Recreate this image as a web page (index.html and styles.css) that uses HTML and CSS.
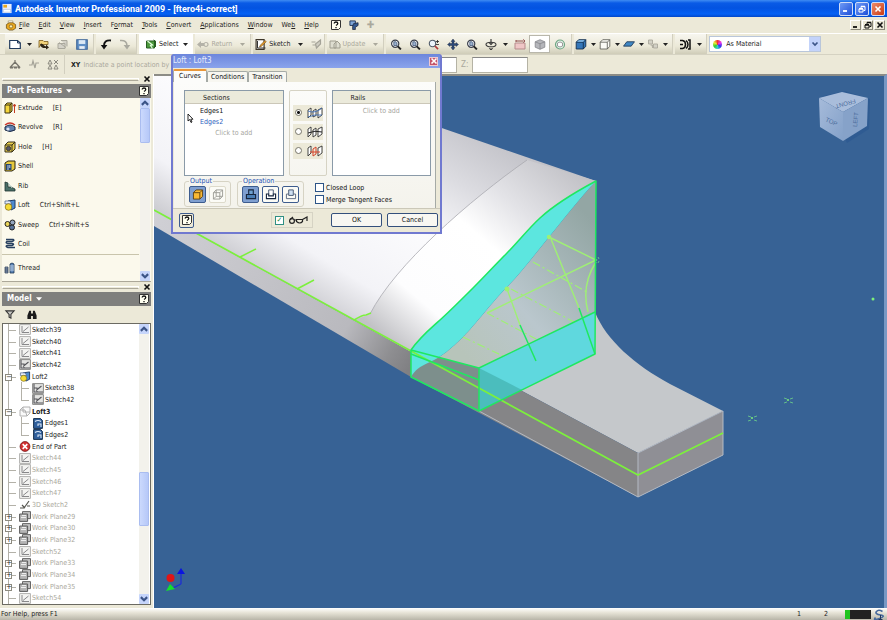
FILE: index.html
```html
<!DOCTYPE html>
<html lang="en">
<head>
    <meta charset="UTF-8">
    <meta name="viewport" content="width=device-width, initial-scale=1.0">
    <title>Autodesk Inventor Professional 2009 - [ftero4i-correct]</title>
    <link rel="stylesheet" href="styles.css">
</head>
<body>
    <!-- Shared icons -->
    <svg class="defs" aria-hidden="true">
        <symbol id="i-caret" viewBox="0 0 5 3"><path d="M0 0h5L2.500 3z" fill="currentColor"/></symbol>
        <symbol id="i-x" viewBox="0 0 8 8"><path d="M1.500 1.500l5 5M6.500 1.500l-5 5" stroke="currentColor" stroke-width="1.600" fill="none"/></symbol>
        <symbol id="i-min" viewBox="0 0 8 8"><path d="M1 6h4" stroke="currentColor" stroke-width="1.800"/></symbol>
        <symbol id="i-restore" viewBox="0 0 8 8"><path d="M1 4h4v3H1zM3 3.500V1.500h4v4H5.500" stroke="currentColor" fill="none"/><path d="M1 3.700h4M3 1.500h4" stroke="currentColor" stroke-width="1.500"/></symbol>
        <symbol id="i-up" viewBox="0 0 8 8"><path d="M1.500 5.500L4 3l2.500 2.500" stroke="#3c5588" stroke-width="1.700" fill="none"/></symbol>
        <symbol id="i-down" viewBox="0 0 8 8"><path d="M1.500 2.500L4 5l2.500-2.500" stroke="#3c5588" stroke-width="1.700" fill="none"/></symbol>
        <symbol id="i-help" viewBox="0 0 10 10"><path d="M.5.500h9v7l-2 2h-7z" fill="#fffff0" stroke="#333"/><path d="M3.200 3.600Q3.200 2 5 2t1.800 1.500Q6.800 4.500 5 5.500M5 7v1.200" fill="none" stroke="#111" stroke-width="1.300"/></symbol>
        <symbol id="i-app" viewBox="0 0 12 12"><path d="M1 1h10v10H1z" fill="#e8eefc"/><path d="M2 2h4v3H2z" fill="#e8a820"/><path d="M2 7h8v3H2z" fill="#fff" stroke="#9db4dd" stroke-width=".6"/></symbol>
        <symbol id="i-part" viewBox="0 0 12 12"><path d="M3 1h5v4H3z" fill="#fff" stroke="#8a7a48" stroke-width=".6"/><path d="M1 5l3-2h4l3 2v4l-3 2H4L1 9z" fill="#e8a820" stroke="#6b4b10" stroke-width=".8"/><circle cx="6" cy="7" r="1.800" fill="#fff3b0" stroke="#6b4b10" stroke-width=".7"/></symbol>
        <symbol id="i-new" viewBox="0 0 12 10"><path d="M.7 1h7.800l2.800 2.500V9H.7z" fill="#fff" stroke="#223a5c" stroke-width="1.200"/><path d="M8.500 1v2.500h2.800" fill="none" stroke="#223a5c"/></symbol>
        <symbol id="i-open" viewBox="0 0 12 10"><path d="M1 1h4l1 1h4v3H3L1 8z" fill="#f3d37a" stroke="#7a5a1c" stroke-width=".8"/><path d="M2 5c2-3 3 1 6 2V5l3 3-3 2V8.500C5 9 3 8 2 5z" fill="#2d2416"/></symbol>
        <symbol id="i-saveall" viewBox="0 0 12 10"><path d="M1 4h7v5H1zM4 1h6v6" fill="#d4d2c8" stroke="#aaa89c"/><path d="M2 3l7 5" stroke="#aaa89c"/></symbol>
        <symbol id="i-save" viewBox="0 0 11 10"><path d="M.7.700h9.600v8.600H.7z" fill="#5f8fc6" stroke="#3a6296"/><path d="M2.500 1h6v3.500h-6z" fill="#dbe8f5"/><path d="M3 6.500h5V9H3z" fill="#e8eef5"/></symbol>
        <symbol id="i-undo" viewBox="0 0 12 11"><path d="M11 1.500C6 1 4 3 4 7" fill="none" stroke="#111" stroke-width="1.900"/><path d="M.8 6h6.600L4 10.500z" fill="#111"/></symbol>
        <symbol id="i-redo" viewBox="0 0 12 11"><path d="M1 1.500C6 1 8 3 8 7" fill="none" stroke="#aaa99f" stroke-width="1.600"/><path d="M4.600 6h6.600L8 10.500z" fill="#aaa99f"/></symbol>
        <symbol id="i-select" viewBox="0 0 11 11"><path d="M1 2h8v7H1z" fill="#4d9a3d" stroke="#275d20"/><path d="M2 2l5 4-2 .5 2 3" fill="none" stroke="#e6ffe0" stroke-width="1.200"/><path d="M8 1l2 1v6" stroke="#275d20" fill="none"/></symbol>
        <symbol id="i-return" viewBox="0 0 12 8"><path d="M0 4l4-3.500v2h3v3H4v2z" fill="#b4b2a8"/><circle cx="9" cy="4" r="2" fill="none" stroke="#b4b2a8" stroke-width="1.200"/></symbol>
        <symbol id="i-sketch" viewBox="0 0 11 11"><path d="M.6.600h8v9.800h-8z" fill="#fff" stroke="#3d3528" stroke-width="1.200"/><path d="M2 2v7h8" fill="none" stroke="#333"/><path d="M4 8l1-2 4.500-4.500 1.200 1.200L6 7.200z" fill="#eaa12f" stroke="#68420e" stroke-width=".6"/></symbol>
        <symbol id="i-grayedit" viewBox="0 0 11 11"><path d="M1 3h4M2 6h3M6 9l-1-4 5-4v4z" fill="#cfcdc2" stroke="#a5a398" stroke-width="1.200"/></symbol>
        <symbol id="i-update" viewBox="0 0 12 11"><path d="M1 2h6v7H1zM5 5l3-3 3 3v4H5z" fill="#deddd0" stroke="#a09e90"/></symbol>
        <symbol id="i-zoom" viewBox="0 0 11 11"><circle cx="4.700" cy="4.700" r="3.600" fill="#fff" stroke="#3a3f4c" stroke-width="1.200"/><path d="M7.300 7.300L10.400 10.400" stroke="#222" stroke-width="1.900"/><path d="M3.300 2.800h2.200l1 1v2.700H3.300z" fill="#9db3cf" stroke="#34496b" stroke-width=".7"/></symbol>
        <symbol id="i-zoompm" viewBox="0 0 11 11"><circle cx="4" cy="4.500" r="3.200" fill="#eef5fb" stroke="#4f5a68" stroke-width="1.100"/><path d="M6.500 7l3 3.200" stroke="#b03a3a" stroke-width="1.700"/><path d="M7.500 2.500h3M9 1v3M7.500 5.500h3" stroke="#222" stroke-width=".8"/></symbol>
        <symbol id="i-pan" viewBox="0 0 11 11"><path d="M5.500 0l2 2.500h-1v2h2v-1L11 5.500l-2.500 2v-1h-2v2h1l-2 2.500-2-2.500h1v-2h-2v1L0 5.500l2.500-2v1h2v-2h-1z" fill="#2e4a78" stroke="#1b2336" stroke-width=".4"/></symbol>
        <symbol id="i-syllabus" viewBox="0 0 11 11"><path d="M1 1h6v5H1z" fill="#7fa6d8" stroke="#1e3357"/><path d="M5 4l5-1v3L7 8v2.500H4V7z" fill="#35598f" stroke="#1b2336" stroke-width=".8"/></symbol>
        <symbol id="i-comm" viewBox="0 0 11 11"><path d="M9 2.500Q5 0 3 2.500t4 3.500-1 3.500-4-1" fill="none" stroke="#46689c" stroke-width="1.600"/><path d="M7 6v4.500M5 10.500h4" stroke="#24375a"/></symbol>
        <symbol id="i-orbit" viewBox="0 0 11 11"><ellipse cx="5.500" cy="5.500" rx="5" ry="2.300" fill="none" stroke="#3b3b3b" stroke-width="1.100"/><path d="M5.500 0v4M4 9l1.500 2 1.500-2M4 4l1.500 1.500L7 4" fill="none" stroke="#333" stroke-width="1.100"/></symbol>
        <symbol id="i-look" viewBox="0 0 12 11"><path d="M1 4h10v6H1z" fill="#efc6c6" stroke="#b58b8b"/><path d="M2 3V1M2 2h7M9 .5l2 1.500-2 1.500" fill="none" stroke="#8f4a4a"/></symbol>
        <symbol id="i-cube" viewBox="0 0 11 11"><path d="M.7 2.800L5.500.700l4.800 2.100v5.400l-4.800 2.100L.7 8.200z" fill="#b5b6bb" stroke="#85868c" stroke-width=".8"/><path d="M.7 2.800l4.800 2 4.800-2M5.500 4.800v5.500" fill="none" stroke="#85868c" stroke-width=".8"/></symbol>
        <symbol id="i-ring" viewBox="0 0 11 11"><circle cx="5.500" cy="5.500" r="4.500" fill="#dff0e4" stroke="#6fa584" stroke-width="1.200"/><path d="M3 4l2.500-1L8 4v3L5.500 8 3 7z" fill="#fff" stroke="#888" stroke-width=".8"/></symbol>
        <symbol id="i-bluecube" viewBox="0 0 11 11"><path d="M.7 3.200L3.200.700h7.100v6.600L7.800 10H.7z" fill="#3476b8" stroke="#14304f" stroke-width=".9"/><path d="M.7 3.200h7.100V10M7.800 3.200L10.300.700" fill="none" stroke="#14304f" stroke-width=".9"/><path d="M1.500 2.800l2-1.600h5.600L7.600 2.800z" fill="#8ec3ee"/></symbol>
        <symbol id="i-wirecube" viewBox="0 0 11 11"><path d="M.7 3.200L3.200.700h7.100v6.600L7.800 10H.7zM.7 3.200h7.100V10M7.800 3.200L10.300.700" fill="#fbfbf6" stroke="#55554f" stroke-width=".8"/></symbol>
        <symbol id="i-plane" viewBox="0 0 11 8"><path d="M3.500 1.500h7l-3 4h-7z" fill="#3f87c4" stroke="#223b58" stroke-width=".8"/></symbol>
        <symbol id="i-shadow" viewBox="0 0 11 11"><path d="M1 1h4v4H1zM6 5h4v4H6zM3 6h2v3" fill="#d3d1c6" stroke="#aaa89c" stroke-width=".9"/></symbol>
        <symbol id="i-dopt" viewBox="0 0 12 11"><path d="M1 1.500h2.500q3 .5 3 4t-3 4H1M1 5.500h3M9 1h2v9H9M7 1.500q2 1.500 2 4T7 9.500" fill="none" stroke="#111" stroke-width="1.500"/></symbol>
        <symbol id="i-tri1" viewBox="0 0 12 11"><path d="M6 1v4M6 3L1.500 8h9L6 3M1 9h3M5 9h3M9 9h2" fill="none" stroke="#77756c" stroke-width="1.200"/></symbol>
        <symbol id="i-tri2" viewBox="0 0 12 11"><path d="M1 6h3l1-4 2 7 1-5h3" fill="none" stroke="#a5a398" stroke-width="1.200"/></symbol>
        <symbol id="i-tri3" viewBox="0 0 12 11"><path d="M1 5l2-4 2 4zM1 10l2-4 2 4zM7 1l4 4M11 1L7 5M7 10l2-4 2 4z" fill="none" stroke="#8a887e"/></symbol>
        <!-- part feature icons -->
        <symbol id="f-extrude" viewBox="0 0 12 12"><path d="M1 3l2-2h5v8l-2 2H1z" fill="#f5d63c" stroke="#3a3212"/><path d="M1 3h5v8M6 3l2-2" fill="none" stroke="#3a3212"/><path d="M10.500 11V3M9 4.500L10.500 2 12 4.500" fill="none" stroke="#c33a22"/></symbol>
        <symbol id="f-revolve" viewBox="0 0 12 12"><path d="M1 6q5-4 10 0v3q-5 3-10 0z" fill="#5f7fae" stroke="#1c2a44"/><path d="M1 4q5-4 10 0" fill="none" stroke="#c7362c" stroke-width="1.400"/><circle cx="4" cy="8" r="1.600" fill="#dce5f2"/></symbol>
        <symbol id="f-hole" viewBox="0 0 12 12"><path d="M1 4l3-3h7v7l-3 3H1z" fill="#e9cf4c" stroke="#36301a"/><path d="M1 4h7v7M8 4l3-3" fill="none" stroke="#36301a"/><circle cx="4.500" cy="7.500" r="2.200" fill="#556" stroke="#222" stroke-width=".7"/></symbol>
        <symbol id="f-shell" viewBox="0 0 12 12"><path d="M1 3l3-2h7v8l-3 2H1z" fill="#e6c83d" stroke="#2b2612"/><path d="M2 4h5.500v6H2z" fill="#28466f"/><path d="M4 5v5M5.800 5v3" stroke="#bcd0ea"/></symbol>
        <symbol id="f-rib" viewBox="0 0 12 12"><path d="M1 2l3 1v4h3l4 2v2H1z" fill="#4a6f68" stroke="#1f3430" stroke-width=".8"/><path d="M4 3l4 5" stroke="#a9c7c0"/></symbol>
        <symbol id="f-loft" viewBox="0 0 12 12"><path d="M4 2l7-1v8l-4 2z" fill="#4d8bd0" stroke="#1e3b66"/><path d="M1 2h5l2 3H1z" fill="#e7eefa" stroke="#41587e" stroke-width=".7"/><circle cx="4.500" cy="8" r="3.300" fill="#f6dc36" stroke="#7b6510" stroke-width=".7"/></symbol>
        <symbol id="f-sweep" viewBox="0 0 12 12"><circle cx="3.500" cy="5" r="2.500" fill="#e9d45a" stroke="#222"/><circle cx="8.500" cy="3.500" r="2.500" fill="#93a5be" stroke="#222"/><circle cx="8" cy="8.500" r="2.500" fill="#5a749a" stroke="#222"/></symbol>
        <symbol id="f-coil" viewBox="0 0 12 12"><path d="M2 1.500h7q2 1-1 2H3q-2 1.500 1 2h4q3 .5 0 2H3q-2 1 1 2h7" fill="none" stroke="#27405f" stroke-width="1.600"/></symbol>
        <symbol id="f-thread" viewBox="0 0 12 12"><path d="M6 2q2-2 4 0v9H6z" fill="#5d86b8" stroke="#203754" stroke-width=".8"/><path d="M6 4h4M6 6h4M6 8h4" stroke="#dfe9f5" stroke-width=".8"/><path d="M1 5h3v6H1zM1 7h3M1 9h3" fill="#8a9db8" stroke="#26364e" stroke-width=".7"/></symbol>
        <!-- tree icons -->
        <symbol id="t-sketch" viewBox="0 0 12 11"><path d="M.6.600h10.800v9.800H.6z" fill="#f4f4f2" stroke="#b0b0ae"/><path d="M3 2v6.500h7M4 7.500L9.500 3" fill="none" stroke="#88888a"/></symbol>
        <symbol id="t-sketchd" viewBox="0 0 12 11"><path d="M.6.600h10.800v9.800H.6z" fill="#e4e4e2" stroke="#8a8a88"/><path d="M2 1v8h9M4 7.500L9.500 3M2 5h3v4" fill="none" stroke="#55555a" stroke-width="1.100"/></symbol>
        <symbol id="t-loftg" viewBox="0 0 12 11"><path d="M1 4l3-3h7v6l-3 3H1zM4 1v5h7M1 4h5l2 6" fill="#fafafa" stroke="#a9a9a9" stroke-width=".9"/></symbol>
        <symbol id="t-edges" viewBox="0 0 10 11"><path d="M.6.600h7l1.800 1.800v8H.6z" fill="#2f5f9c" stroke="#16304f"/><path d="M2 3.500q3-2 6 0M5 8V6h3v3" fill="none" stroke="#dbe8f7" stroke-width="1.100"/></symbol>
        <symbol id="t-end" viewBox="0 0 12 12"><circle cx="6" cy="6" r="5.400" fill="#d22f2f" stroke="#6b1414" stroke-width=".8"/><path d="M3.500 3.500l5 5M8.500 3.500l-5 5" stroke="#fff" stroke-width="1.800"/></symbol>
        <symbol id="t-3d" viewBox="0 0 12 11"><path d="M1 9h4l5-7M3 6l3 3M8 7h3" fill="none" stroke="#55554f" stroke-width="1.200"/></symbol>
        <symbol id="t-plane" viewBox="0 0 12 11"><path d="M3.500.600h8v7h-8z" fill="#c4c4c4" stroke="#666"/><path d="M.6 3h8v7.400h-8z" fill="#b5b5b5" stroke="#5a5a5a"/><path d="M2 6.500h5M3 4.500h4" stroke="#eee"/></symbol>
        <!-- loft dialog icons -->
        <symbol id="d-rail" viewBox="0 0 16 12"><path d="M1 11V3l3-2v7zM6 10V4l3-2v6.500zM11 11V3l4-2v7z" fill="#fff" stroke="#333" stroke-width=".9"/><path d="M1 4q7 3 14-3M1 10q7-3 14-2" fill="none" stroke="#3f6fb5" stroke-width=".9"/></symbol>
        <symbol id="d-center" viewBox="0 0 16 12"><path d="M1 11V3l3-2v7zM6 11V4l3-2v7zM11 11V3l4-2v7z" fill="#fff" stroke="#333" stroke-width=".9"/><path d="M1 7q7-3 14-1" fill="none" stroke="#222"/></symbol>
        <symbol id="d-area" viewBox="0 0 16 12"><path d="M1 11V3l3-2v7zM11 11V3l4-2v7z" fill="#fff" stroke="#333" stroke-width=".9"/><path d="M6 11V4l3-2v7zM3 7h10" fill="none" stroke="#d4452b"/></symbol>
        <symbol id="d-solid" viewBox="0 0 12 12"><path d="M1 4l3-3h7v7l-3 3H1z" fill="#f9b934" stroke="#5c3f10"/><path d="M1 4h7v7M8 4l3-3" fill="none" stroke="#5c3f10"/></symbol>
        <symbol id="d-surf" viewBox="0 0 12 12"><path d="M1 4l3-3h7v7l-3 3H1zM1 4h7v7M8 4l3-3M4 1v7h7M4 8l-3 3" fill="none" stroke="#9a9a94"/></symbol>
        <symbol id="d-join" viewBox="0 0 12 12"><path d="M3.500 1h5v5h-5z" fill="#6fa0cf" stroke="#16253d" stroke-width="1.200"/><path d="M1 6h10v4.500H1z" fill="#4a7db4" stroke="#16253d" stroke-width="1.200"/></symbol>
        <symbol id="d-cut" viewBox="0 0 12 12"><path d="M3.500 6V1h5v5" fill="#fff" stroke="#44546e"/><path d="M1 5.500h2.500v2h5v-2H11v5H1z" fill="#fff" stroke="#16253d" stroke-width="1.200"/></symbol>
        <symbol id="d-inter" viewBox="0 0 12 12"><path d="M3.500 7V1h5v6z" fill="#cfe0f2" stroke="#44546e"/><path d="M1 5.500h2.500M8.500 5.500H11v5H1v-5" fill="none" stroke="#56667f"/></symbol>
        <symbol id="d-glasses" viewBox="0 0 20 8"><circle cx="4" cy="5" r="2.400" fill="none" stroke="#222" stroke-width="1.200"/><path d="M8.500 3.500h6v2q-2.500 3-6 0zM6 4h2.500M2 3.500L5 1M14.500 3.500L19 1v4" fill="none" stroke="#222" stroke-width="1.200"/></symbol>
    </svg>

    <header class="titlebar">
        <svg class="icon"><use href="#i-app"/></svg>
        <h1>Autodesk Inventor Professional 2009 - [ftero4i-correct]</h1>
        <button class="win-btn" aria-label="Minimize"><svg class="icon-sm"><use href="#i-min"/></svg></button>
        <button class="win-btn" aria-label="Restore"><svg class="icon-sm"><use href="#i-restore"/></svg></button>
        <button class="win-btn win-close" aria-label="Close"><svg class="icon-sm"><use href="#i-x"/></svg></button>
    </header>

    <nav class="menubar">
        <svg class="icon"><use href="#i-part"/></svg>
        <a href="#"><u>F</u>ile</a>
        <a href="#"><u>E</u>dit</a>
        <a href="#"><u>V</u>iew</a>
        <a href="#"><u>I</u>nsert</a>
        <a href="#">F<u>o</u>rmat</a>
        <a href="#"><u>T</u>ools</a>
        <a href="#"><u>C</u>onvert</a>
        <a href="#"><u>A</u>pplications</a>
        <a href="#"><u>W</u>indow</a>
        <a href="#">We<u>b</u></a>
        <a href="#"><u>H</u>elp</a>
        <div class="menu-extra">
            <button aria-label="Help topics"><svg class="icon-md"><use href="#i-help"/></svg></button>
            <button aria-label="Visual syllabus"><svg class="icon-md"><use href="#i-syllabus"/></svg></button>
            <button class="muted" aria-label="Add">✚</button>
        </div>
        <div class="mdi">
            <button aria-label="Minimize document"><svg class="icon-sm"><use href="#i-min"/></svg></button>
            <button aria-label="Restore document"><svg class="icon-sm"><use href="#i-restore"/></svg></button>
            <button aria-label="Close document"><svg class="icon-sm"><use href="#i-x"/></svg></button>
        </div>
    </nav>

    <div class="toolbar">
        <div class="group">
            <button class="tool" aria-label="New"><svg class="icon"><use href="#i-new"/></svg></button>
            <button class="drop" aria-label="New options"><svg><use href="#i-caret"/></svg></button>
            <button class="tool" aria-label="Open"><svg class="icon"><use href="#i-open"/></svg></button>
            <button class="tool" aria-label="Save all"><svg class="icon"><use href="#i-saveall"/></svg></button>
            <button class="tool" aria-label="Save"><svg class="icon"><use href="#i-save"/></svg></button>
        </div>
        <div class="group">
            <button class="tool" aria-label="Undo"><svg class="icon"><use href="#i-undo"/></svg></button>
            <button class="tool" aria-label="Redo"><svg class="icon"><use href="#i-redo"/></svg></button>
        </div>
        <div class="group select-group">
            <button class="labelled"><svg class="icon"><use href="#i-select"/></svg>Select</button>
            <button class="drop" aria-label="Select options"><svg><use href="#i-caret"/></svg></button>
        </div>
        <div class="group wide">
            <button class="labelled muted"><svg class="icon"><use href="#i-return"/></svg>Return</button>
            <button class="drop muted" aria-label="Return options"><svg><use href="#i-caret"/></svg></button>
        </div>
        <div class="group wide">
            <button class="labelled"><svg class="icon"><use href="#i-sketch"/></svg>Sketch</button>
            <button class="drop" aria-label="Sketch options"><svg><use href="#i-caret"/></svg></button>
            <button class="tool" aria-label="Edit"><svg class="icon"><use href="#i-grayedit"/></svg></button>
        </div>
        <div class="group wide">
            <button class="labelled muted"><svg class="icon"><use href="#i-update"/></svg>Update</button>
            <button class="drop muted" aria-label="Update options"><svg><use href="#i-caret"/></svg></button>
        </div>
        <div class="group">
            <button class="tool" aria-label="Zoom all"><svg class="icon"><use href="#i-zoom"/></svg></button>
            <button class="tool" aria-label="Zoom window"><svg class="icon"><use href="#i-zoom"/></svg></button>
            <button class="tool" aria-label="Zoom"><svg class="icon"><use href="#i-zoompm"/></svg></button>
            <button class="tool" aria-label="Pan"><svg class="icon"><use href="#i-pan"/></svg></button>
            <button class="tool" aria-label="Zoom selected"><svg class="icon"><use href="#i-zoom"/></svg></button>
            <button class="tool" aria-label="Rotate"><svg class="icon"><use href="#i-orbit"/></svg></button>
            <button class="drop" aria-label="Rotate options"><svg><use href="#i-caret"/></svg></button>
            <button class="tool" aria-label="Look at"><svg class="icon"><use href="#i-look"/></svg></button>
            <button class="tool pressed" aria-label="View cube"><svg class="icon"><use href="#i-cube"/></svg></button>
            <button class="tool" aria-label="Steering wheel"><svg class="icon"><use href="#i-ring"/></svg></button>
        </div>
        <div class="group tight">
            <button class="tool" aria-label="Shaded"><svg class="icon"><use href="#i-bluecube"/></svg></button>
            <button class="drop" aria-label="Display mode"><svg><use href="#i-caret"/></svg></button>
            <button class="tool" aria-label="Camera"><svg class="icon"><use href="#i-wirecube"/></svg></button>
            <button class="drop" aria-label="Camera mode"><svg><use href="#i-caret"/></svg></button>
            <button class="tool" aria-label="Ground plane"><svg class="icon"><use href="#i-plane"/></svg></button>
            <button class="drop" aria-label="Plane options"><svg><use href="#i-caret"/></svg></button>
            <button class="tool" aria-label="Shadow"><svg class="icon"><use href="#i-shadow"/></svg></button>
            <button class="drop" aria-label="Shadow options"><svg><use href="#i-caret"/></svg></button>
        </div>
        <div class="group">
            <button class="tool" aria-label="Component opacity"><svg class="icon"><use href="#i-dopt"/></svg></button>
            <button class="drop" aria-label="Opacity options"><svg><use href="#i-caret"/></svg></button>
        </div>
        <label class="color-pick">
            <span class="wheel"></span>
            <select aria-label="Color"><option>As Material</option></select>
            <span class="combo-arrow"><svg class="icon-sm"><use href="#i-down"/></svg></span>
        </label>
    </div>

    <div class="toolbar precise">
        <div class="group">
            <button class="tool" aria-label="Reset to origin"><svg class="icon"><use href="#i-tri1"/></svg></button>
            <button class="tool" aria-label="Relative"><svg class="icon"><use href="#i-tri2"/></svg></button>
            <button class="tool" aria-label="Precise redefine"><svg class="icon"><use href="#i-tri3"/></svg></button>
        </div>
        <label class="point"><b>XY</b><input class="hint" type="text" value="Indicate a point location by entering X and Y coordinates" readonly></label>
        <input class="coord" type="text" aria-label="Y">
        <label class="muted zlabel" for="z">Z:</label>
        <input class="coord" id="z" type="text">
    </div>

    <main class="workspace">
        <aside class="sidebar">
            <section class="panel">
                <div class="grip"><span></span><button aria-label="Close Part Features"><svg class="icon-sm"><use href="#i-x"/></svg></button></div>
                <h2>Part Features <svg class="head-caret"><use href="#i-caret"/></svg><button aria-label="Panel help"><svg class="icon-md"><use href="#i-help"/></svg></button></h2>
                <div class="scroller features">
                    <ul>
                        <li><svg class="icon"><use href="#f-extrude"/></svg>Extrude<kbd>[E]</kbd></li>
                        <li><svg class="icon"><use href="#f-revolve"/></svg>Revolve<kbd>[R]</kbd></li>
                        <li><svg class="icon"><use href="#f-hole"/></svg>Hole<kbd>[H]</kbd></li>
                        <li><svg class="icon"><use href="#f-shell"/></svg>Shell</li>
                        <li><svg class="icon"><use href="#f-rib"/></svg>Rib</li>
                        <li><svg class="icon"><use href="#f-loft"/></svg>Loft<kbd>Ctrl+Shift+L</kbd></li>
                        <li><svg class="icon"><use href="#f-sweep"/></svg>Sweep<kbd>Ctrl+Shift+S</kbd></li>
                        <li><svg class="icon"><use href="#f-coil"/></svg>Coil</li>
                        <li class="after-rule"><svg class="icon"><use href="#f-thread"/></svg>Thread</li>
                    </ul>
                    <div class="scrollbar"><svg class="sb-btn" viewBox="0 0 8 8"><use href="#i-up"/></svg><span class="thumb"></span><svg class="sb-btn end" viewBox="0 0 8 8"><use href="#i-down"/></svg></div>
                </div>
            </section>

            <section class="panel model">
                <div class="grip"><span></span><button aria-label="Close Model"><svg class="icon-sm"><use href="#i-x"/></svg></button></div>
                <h2>Model <svg class="head-caret"><use href="#i-caret"/></svg><button aria-label="Model help"><svg class="icon-md"><use href="#i-help"/></svg></button></h2>
                <div class="model-tools">
                    <button aria-label="Filter"><svg class="icon" viewBox="0 0 12 12"><path d="M1.500 2h9L7 6v4L5 9V6z" fill="#c9c9c4" stroke="#333" stroke-width="1.200"/></svg></button>
                    <button aria-label="Find"><svg class="icon" viewBox="0 0 12 12"><path d="M1 11V7l2-5h2v3h2V2h2l2 5v4H7V7.500H5V11z" fill="#1b1b1b"/></svg></button>
                </div>
                <div class="scroller tree">
                    <ul>
                        <li><svg class="icon"><use href="#t-sketch"/></svg>Sketch39</li>
                        <li><svg class="icon"><use href="#t-sketch"/></svg>Sketch40</li>
                        <li><svg class="icon"><use href="#t-sketch"/></svg>Sketch41</li>
                        <li><svg class="icon"><use href="#t-sketchd"/></svg>Sketch42</li>
                        <li><i class="node">−</i><svg class="icon"><use href="#f-loft"/></svg>Loft2</li>
                        <li class="child"><svg class="icon"><use href="#t-sketchd"/></svg>Sketch38</li>
                        <li class="child last"><svg class="icon"><use href="#t-sketchd"/></svg>Sketch42</li>
                        <li><i class="node">−</i><svg class="icon"><use href="#t-loftg"/></svg><b>Loft3</b></li>
                        <li class="child"><svg class="icon"><use href="#t-edges"/></svg>Edges1</li>
                        <li class="child last"><svg class="icon"><use href="#t-edges"/></svg>Edges2</li>
                        <li><svg class="icon"><use href="#t-end"/></svg>End of Part</li>
                        <li class="muted"><svg class="icon"><use href="#t-sketch"/></svg>Sketch44</li>
                        <li class="muted"><svg class="icon"><use href="#t-sketch"/></svg>Sketch45</li>
                        <li class="muted"><svg class="icon"><use href="#t-sketch"/></svg>Sketch46</li>
                        <li class="muted"><svg class="icon"><use href="#t-sketch"/></svg>Sketch47</li>
                        <li class="muted"><svg class="icon"><use href="#t-3d"/></svg>3D Sketch2</li>
                        <li class="muted"><i class="node">+</i><svg class="icon"><use href="#t-plane"/></svg>Work Plane29</li>
                        <li class="muted"><i class="node">+</i><svg class="icon"><use href="#t-plane"/></svg>Work Plane30</li>
                        <li class="muted"><i class="node">+</i><svg class="icon"><use href="#t-plane"/></svg>Work Plane32</li>
                        <li class="muted"><svg class="icon"><use href="#t-sketch"/></svg>Sketch52</li>
                        <li class="muted"><i class="node">+</i><svg class="icon"><use href="#t-plane"/></svg>Work Plane33</li>
                        <li class="muted"><i class="node">+</i><svg class="icon"><use href="#t-plane"/></svg>Work Plane34</li>
                        <li class="muted"><i class="node">+</i><svg class="icon"><use href="#t-plane"/></svg>Work Plane35</li>
                        <li class="muted"><svg class="icon"><use href="#t-sketch"/></svg>Sketch54</li>
                    </ul>
                    <div class="scrollbar"><svg class="sb-btn" viewBox="0 0 8 8"><use href="#i-up"/></svg><span class="thumb"></span><svg class="sb-btn end" viewBox="0 0 8 8"><use href="#i-down"/></svg></div>
                </div>
            </section>
        </aside>

        <div class="viewport">
            <svg viewBox="154 76 730 532" preserveAspectRatio="xMinYMin slice" role="img" aria-label="Lofted wing model">
                <defs>
                    <linearGradient id="wing" gradientUnits="userSpaceOnUse" x1="480" y1="125" x2="352" y2="334">
                        <stop offset="0" stop-color="#c2c2c8"/>
                        <stop offset=".25" stop-color="#dcdce1"/>
                        <stop offset=".5" stop-color="#fbfbfd"/>
                        <stop offset=".8" stop-color="#f3f3f7"/>
                        <stop offset="1" stop-color="#cacacf"/>
                    </linearGradient>
                    <linearGradient id="wing2" gradientUnits="userSpaceOnUse" x1="560" y1="150" x2="394" y2="345">
                        <stop offset="0" stop-color="#bfbfc4"/>
                        <stop offset=".28" stop-color="#e3e3e7"/>
                        <stop offset=".46" stop-color="#fff"/>
                        <stop offset=".8" stop-color="#fdfdfe"/>
                        <stop offset="1" stop-color="#c2c2c6"/>
                    </linearGradient>
                    <linearGradient id="belly" gradientUnits="userSpaceOnUse" x1="154" y1="215" x2="411" y2="365">
                        <stop offset="0" stop-color="#d0d0d5"/>
                        <stop offset=".75" stop-color="#b9b9be"/>
                        <stop offset=".92" stop-color="#8e8e91"/>
                        <stop offset="1" stop-color="#808083"/>
                    </linearGradient>
                    <linearGradient id="face" gradientUnits="userSpaceOnUse" x1="460" y1="350" x2="600" y2="230">
                        <stop offset="0" stop-color="#b7c4ba"/>
                        <stop offset=".4" stop-color="#bac7cd"/>
                        <stop offset=".7" stop-color="#a6b6b8"/>
                        <stop offset="1" stop-color="#93a6a4"/>
                    </linearGradient>
                    <linearGradient id="cube" x1="0" y1="0" x2="1" y2="1">
                        <stop offset="0" stop-color="#a6bbda"/>
                        <stop offset="1" stop-color="#84a1c9"/>
                    </linearGradient>
                </defs>

                <!-- wing skin -->
                <path d="M154 29L596 181 411 352 154 210z" fill="url(#wing)"/>
                <path d="M527 160C470 200 395 265 370 314L354 320 411 352 596 181z" fill="url(#wing2)"/>
                <path d="M527 160C470 200 395 265 370 314" fill="none" stroke="#a9a9b0" stroke-width=".8"/>
                <path d="M154 210L411 352V377L154 226z" fill="url(#belly)"/>

                <!-- tongue -->
                <path d="M595 312C606 340 635 365 670 384L723 411 638 453 479 368z" fill="#c5c8cb"/>
                <path d="M411 350L479 368 638 453V497L411 377z" fill="#858587"/>
                <path d="M638 453L723 411V455L638 497z" fill="#8f8f95"/>
                <path d="M638 453L723 411M638 453V497L723 455V411M479 411L638 497" fill="none" stroke="#b4bac4" stroke-width="1"/>

                <!-- loft section faces -->
                <path d="M596 181C580 198 563 220 549 237S521 273 507 287 475 325 463 337 441 357 430 362L479 368 595 312z" fill="url(#face)"/>
                <path d="M411 350L479 368V411L411 377z" fill="#7d8f8c"/>
                <path d="M411 350C420 337 430 329 440 320S462 299 473 288 496 264 507 253 528 229 540 218 566 197 596 181C580 198 563 220 549 237S521 273 507 287 475 325 463 337 441 357 430 362 415 370 411 377z" fill="#5ce6df"/>
                <path d="M479 368L595 312V354L479 411z" fill="#5fd8de"/>
                <path d="M479 368L522 390 479 411z" fill="#4bbdbd"/>

                <!-- sketch curves -->
                <g fill="none" stroke="#7cf03c" stroke-width="1.500">
                    <path d="M154 210L411 351 638 475 723 433" stroke-width="1.700"/>
                    <path d="M240 257l16-8M297 289l17-9M354 320q8-5 12-5l5-2"/>
                </g>
                <g fill="none" stroke="#9ff074" stroke-width="1.400">
                    <path d="M549 237L596 260 487 313M551 239L579 308M507 289L520 325M596 262Q581 285 588 312"/>
                    <path d="M533 262L587 292M511 289L576 323M487 313L536 339M463 337L503 356" stroke-dasharray="8 3 2 3" stroke-width="1.200"/>
                    <circle cx="549" cy="237" r="1.500" fill="#9ff074"/><circle cx="507" cy="289" r="1.800" fill="#9ff074"/>
                </g>
                <g fill="none" stroke="#1fe860" stroke-width="1.500" stroke-linejoin="round">
                    <path d="M411 350C420 337 430 329 440 320S462 299 473 288 496 264 507 253 528 229 540 218 566 197 596 181L595 354 479 411 411 377z"/>
                    <path d="M411 350L479 368 595 312M479 368V411M411 354L479 380M579 308L595 354M520 325L536 361"/>
                </g>
                <path d="M748 416l3 1M757 416l-3 1M748 421l3-1M757 421l-3-1M784 398l3 1M793 398l-3 1M784 403l3-1M793 403l-3-1M598 257l1 2M598 263l1-2" stroke="#6fd48a" stroke-width=".8" fill="none"/>
                <g fill="#7df07a"><circle cx="752" cy="418" r="1"/><circle cx="788" cy="400" r="1"/><circle cx="873" cy="299" r="1.500"/></g>

                <!-- view cube -->
                <path d="M823 96l22-5 25 8-1 30-22 14z" fill="#2f5b92"/>
                <path d="M819 98L842 92 868 98 843 112z" fill="#a9bddb"/>
                <path d="M819 98L843 112V141L820 127z" fill="url(#cube)"/>
                <path d="M868 98L843 112V141L867 126z" fill="#86a2c9"/>
                <g class="cube-text">
                    <text transform="translate(855 99) rotate(165)">FRONT</text>
                    <text transform="translate(825 121) rotate(25)">TOP</text>
                    <text transform="translate(857 127) rotate(-85)">LEFT</text>
                </g>

                <!-- axis triad -->
                <path d="M181 584V574M181 584l-8 4" stroke="#1b2bd8" stroke-width="1.200"/>
                <path d="M177 574L181 568 185 574z" fill="#0a14e0"/>
                <circle cx="170.500" cy="578" r="4" fill="#e01515"/>
                <path d="M166 591L170 584 175 589z" fill="#14e02c"/>
            </svg>
        </div>
    </main>

    <footer class="statusbar">
        <span class="status-text">For Help, press F1</span>
        <span class="count">1</span>
        <span class="count">2</span>
        <span class="memory"></span>
        <svg class="icon"><use href="#i-comm"/></svg>
    </footer>

    <!-- Loft dialog -->
    <form class="dialog" role="dialog" aria-label="Loft : Loft3">
        <div class="dialog-title"><span>Loft : Loft3</span><button type="button" aria-label="Close dialog"><svg class="icon-sm"><use href="#i-x"/></svg></button></div>
        <div class="tabs">
            <button type="button" class="active">Curves</button>
            <button type="button">Conditions</button>
            <button type="button">Transition</button>
        </div>
        <div class="page">
            <div class="lists">
                <div class="listbox">
                    <div class="list-head">Sections</div>
                    <p>Edges1</p>
                    <p class="picked"><svg class="pointer" viewBox="0 0 7 10"><path d="M1 1v7l1.700-1.500L4 9.500l1-.5-1.200-2.800H6z" fill="#fff" stroke="#111" stroke-width=".9"/></svg>Edges2</p>
                    <p class="add">Click to add</p>
                </div>
                <div class="modes">
                    <label><input type="radio" name="mode" checked aria-label="Rails"><svg><use href="#d-rail"/></svg></label>
                    <label><input type="radio" name="mode" aria-label="Center line"><svg><use href="#d-center"/></svg></label>
                    <label><input type="radio" name="mode" aria-label="Area loft"><svg><use href="#d-area"/></svg></label>
                </div>
                <div class="listbox">
                    <div class="list-head">Rails</div>
                    <p class="add">Click to add</p>
                </div>
            </div>
            <div class="options">
                <fieldset>
                    <legend>Output</legend>
                    <button type="button" class="opt on" aria-label="Solid"><svg class="icon"><use href="#d-solid"/></svg></button>
                    <button type="button" class="opt off" aria-label="Surface"><svg class="icon"><use href="#d-surf"/></svg></button>
                </fieldset>
                <fieldset>
                    <legend>Operation</legend>
                    <button type="button" class="opt on" aria-label="Join"><svg class="icon"><use href="#d-join"/></svg></button>
                    <button type="button" class="opt" aria-label="Cut"><svg class="icon"><use href="#d-cut"/></svg></button>
                    <button type="button" class="opt" aria-label="Intersect"><svg class="icon"><use href="#d-inter"/></svg></button>
                </fieldset>
                <div class="checks">
                    <label><input type="checkbox">Closed Loop</label>
                    <label><input type="checkbox">Merge Tangent Faces</label>
                </div>
            </div>
        </div>
        <div class="dialog-foot">
            <button type="button" class="help" aria-label="Dialog help"><svg class="icon-md"><use href="#i-help"/></svg></button>
            <label class="preview"><input type="checkbox" checked aria-label="Preview"><svg><use href="#d-glasses"/></svg></label>
            <button type="button" class="push">OK</button>
            <button type="button" class="push">Cancel</button>
        </div>
    </form>
</body>
</html>
```
FILE: styles.css
```css
* { margin: 0; padding: 0; box-sizing: border-box; }
html, body { height: 100%; }
body { display: flex; flex-direction: column; background: #ece9d8; color: #222; font: 7px/10px "DejaVu Sans Condensed", "DejaVu Sans", Tahoma, sans-serif; overflow: hidden; }
button, input, select { font: inherit; color: inherit; background: none; border: none; }
button { display: flex; align-items: center; justify-content: center; }
ul { list-style: none; }
a { color: inherit; text-decoration: none; }
svg { display: block; flex: none; }
.defs { position: absolute; width: 0; height: 0; }
.icon { width: 12px; height: 11px; }
.icon-md { width: 10px; height: 10px; }
.icon-sm { width: 8px; height: 8px; }
.muted { color: #aaa89c; }

/* title and menus */
.titlebar { display: flex; align-items: center; gap: 2px; height: 17px; padding: 0 2px 0 1px; color: #fff; background: linear-gradient(#3f8cf3 0, #0a5be6 3px, #0353e1 8px, #0561f5 14px, #0347c8 17px); }
.titlebar h1 { flex: 1; font: bold 9px/14px Roboto, "Open Sans", sans-serif; white-space: nowrap; }
.win-btn { width: 14px; height: 14px; border: 1px solid #cfdcf8; border-radius: 2px; background: linear-gradient(135deg, #6f9af5, #1e4fd8); }
.win-close { background: linear-gradient(135deg, #ee8c6c, #cb3a12); }
.menubar { display: flex; align-items: center; gap: 9px; height: 16px; padding: 0 2px 0 5px; }
.menubar > .icon { margin-right: -7px; }
.menu-extra { display: flex; align-items: center; gap: 8px; margin-left: 3px; }
.menu-extra button:last-child { font-size: 10px; }
.mdi { display: flex; gap: 1px; margin-left: auto; }
.mdi button { width: 11px; height: 10px; border: 1px solid; border-color: #fff #8c8a7c #8c8a7c #fff; color: #111; }

/* toolbars */
.toolbar { display: flex; align-items: center; height: 21px; padding-left: 5px; border-top: 1px solid #fff; }
.group { display: flex; align-items: center; height: 20px; padding-right: 2px; margin-right: 2px; border-right: 1px solid #d2cfbf; background: linear-gradient(#f7f6ef, #ece9d8 60%, #cfccb8); }
.tool { width: 19px; height: 18px; }
.drop { width: 10px; height: 18px; }
.drop svg { width: 5px; height: 3px; }
.labelled { gap: 2px; height: 18px; padding: 0 2px; }
.wide { padding-right: 0; }
.wide .drop { width: 16px; }
.wide .tool { width: 15px; }
.tight .tool { width: 14px; }
.tool.pressed { width: 21px; border: 1px solid #b9b7ab; background: #fff; }
.select-group { background: #fff; padding: 0 3px 0 4px; border-right: 0; }
.color-pick { display: flex; align-items: center; width: 112px; height: 16px; padding-left: 3px; background: #fff; border: 1px solid #b9c6da; }
.color-pick select { flex: 1; min-width: 0; appearance: none; padding-left: 4px; }
.wheel { width: 9px; height: 9px; border-radius: 50%; background: conic-gradient(#e33, #e3e, #33e, #3cc, #3c3, #ee3, #e33); }
.combo-arrow { display: flex; align-items: center; justify-content: center; width: 11px; height: 14px; background: #c3d3fa; }
.precise { height: 20px; border-top: 1px solid #d5d2c2; }
.precise .group { height: 19px; background: none; }
.point { display: flex; align-items: center; gap: 3px; width: 354px; padding-left: 4px; }
.hint { flex: 1; color: #aaa89c; }
.coord { width: 56px; height: 16px; background: #fff; border: 1px solid #b5b3a5; border-top-color: #888; }
.point + .coord { width: 36px; }
.zlabel { padding: 0 4px; font-size: 8px; }

/* side panels */
.workspace { flex: 1; display: flex; min-height: 0; }
.sidebar { display: flex; flex-direction: column; width: 154px; padding: 0 2px; border-right: 1px solid #fff; }
.panel { display: flex; flex-direction: column; }
.model { flex: 1; min-height: 0; padding-bottom: 3px; }
.grip { display: flex; align-items: center; gap: 4px; height: 10px; }
.grip span { flex: 1; height: 3px; border: 1px solid; border-color: #fff #fff #aca899; }
.grip button { width: 8px; height: 8px; color: #111; }
.panel h2 { display: flex; align-items: center; gap: 4px; height: 14px; padding: 0 2px 0 5px; background: #7f7f7d; color: #fff; font-size: 8px; }
.panel h2 button { margin-left: auto; }
.head-caret { width: 6px; height: 4px; }
.scroller { display: flex; }
.scroller ul { flex: 1; display: flex; flex-direction: column; }
.scroller li { display: flex; align-items: center; flex: 1; min-height: 0; white-space: nowrap; }
.features { height: 184px; background: #fbf9ec; border-bottom: 1px solid #aca899; }
.features li { gap: 2px; padding-left: 2px; }
.features .icon { height: 12px; }
.features kbd { font: inherit; margin-left: 8px; }
.features .after-rule { flex: 0 0 27px; margin-right: 1px; border-top: 1px solid #c9c5ac; }
.scrollbar { display: flex; flex-direction: column; width: 10px; margin-right: 1px; background: #f3f2ec; }
.sb-btn { width: 10px; height: 10px; background: #c6d5fb; border-radius: 1px; }
.sb-btn.end { margin-top: auto; }
.thumb { height: 35px; background: linear-gradient(90deg, #cbd9fd, #b6c8f8); border: 1px solid #aabdf0; border-radius: 1px; }
.model-tools { display: flex; align-items: center; gap: 10px; height: 17px; padding-left: 2px; }
.tree { flex: 1; min-height: 0; background: #fff; border: 1px solid #6b6a62; }
.tree .thumb { height: 54px; margin-top: 138px; }
.tree ul { padding-left: 5px; background: linear-gradient(#b3b1a8, #b3b1a8) 5px 0 / 1px 100% no-repeat; }
.tree li { gap: 1px; padding-left: 11px; position: relative; }
.tree li::after { content: ""; position: absolute; left: 0; top: 50%; width: 8px; border-top: 1px solid #b3b1a8; }
.tree .child { padding-left: 24px; }
.tree .child::after { left: 13px; }
.tree .child::before { content: ""; position: absolute; left: 13px; top: 0; bottom: 0; border-left: 1px solid #b3b1a8; }
.tree .last::before { bottom: 50%; }
.node { position: absolute; z-index: 1; left: -3px; top: 50%; width: 7px; height: 7px; margin-top: -3px; background: #fff; border: 1px solid #8d8b80; color: #222; font: 7px/5px "DejaVu Sans", sans-serif; text-align: center; }

/* 3D view */
.viewport { flex: 1; min-width: 0; background: #376295; border: solid #8c8c86; border-width: 2px 0 0; border-right: 3px solid #7898c4; }
.viewport svg { width: 100%; height: 100%; }
.cube-text { font: 6px "Liberation Sans", sans-serif; fill: #4c6c9c; }

/* status bar */
.statusbar { display: flex; align-items: center; gap: 17px; height: 12px; padding: 0 2px 0 1px; background: linear-gradient(#fff, #e6e3d6 40%, #b8b5a8); }
.status-text { flex: 1; }
.count { width: 10px; text-align: right; }
.memory { width: 26px; height: 9px; background: linear-gradient(90deg, #1fc41f 5px, #222 5px); }
.statusbar .icon { margin-left: -15px; }

/* loft dialog */
.dialog { position: absolute; left: 171px; top: 54px; width: 271px; height: 180px; display: flex; flex-direction: column; background: #ece9d8; border: 2px solid #7079d0; border-top: 0; border-radius: 3px 3px 0 0; }
.dialog-title { display: flex; align-items: center; justify-content: space-between; height: 14px; padding-right: 2px; color: #e6ecfb; font: 8px/14px "DejaVu Sans Condensed", sans-serif; background: linear-gradient(#6c86dc, #8ba4ec); }
.dialog-title button { width: 9px; height: 9px; border: 1px solid #f0c8d0; background: #c4546a; color: #fff; }
.tabs { display: flex; align-items: flex-end; height: 14px; }
.tabs button { height: 11px; padding: 0 3px; background: #f8f7f1; border: 1px solid #a5aaa6; border-bottom: 0; border-radius: 2px 2px 0 0; color: #111; }
.tabs .active { height: 13px; padding: 0 5px; border-top: 2px solid #e9973a; background: #fcfcfa; }
.page { flex: 1; display: flex; flex-direction: column; gap: 1px; margin: 0 4px 0 1px; padding: 8px 4px 1px 10px; background: linear-gradient(#fcfcfa, #f4f3ec); border-right: 1px solid #a5aaa6; }
.lists { display: flex; gap: 5px; height: 86px; }
.listbox { flex: 1; background: #fff; border: 1px solid #8a9aa8; }
.list-head { height: 13px; padding-left: 18px; line-height: 14px; background: #ebeadb; border-bottom: 1px solid #cbc7b8; margin-bottom: 2px; }
.listbox p { position: relative; height: 11px; padding-left: 15px; line-height: 11px; color: #111; }
.listbox .picked { color: #2e62c0; }
.listbox .add { padding: 0; text-align: center; color: #a6a6a0; }
.pointer { position: absolute; left: 2px; top: -4px; width: 7px; height: 10px; }
.modes { width: 38px; padding: 14px 3px 0; display: flex; flex-direction: column; gap: 3px; border: 1px solid #d6d3c4; border-radius: 2px; }
.modes label { display: flex; align-items: center; gap: 5px; height: 16px; padding-left: 2px; background: #ece9d8; }
.modes label svg { width: 16px; height: 12px; }
.modes input { appearance: none; width: 7px; height: 7px; border: 1px solid #77756a; border-radius: 50%; background: #fff; }
.modes input:checked { background: radial-gradient(#111 0 1px, #fff 2px); }
.options { display: flex; gap: 6px; }
fieldset { display: flex; gap: 3px; height: 30px; padding: 0 4px 2px; border: 1px solid #d6d3c4; border-radius: 3px; }
legend { color: #2353b5; padding: 0 1px; line-height: 9px; }
.opt { width: 17px; height: 17px; background: #fbfbf6; border: 1px solid #3d5c8e; border-radius: 2px; }
.opt.on { background: #7f9fd0; }
.opt.off { border-color: #dddacb; }
.checks { display: flex; flex-direction: column; gap: 2px; padding: 6px 0 0 5px; }
.checks label { display: flex; align-items: center; gap: 2px; height: 10px; white-space: nowrap; color: #111; }
input[type="checkbox"] { appearance: none; width: 9px; height: 9px; border: 1px solid #2c5487; background: #fff; }
.preview input:checked { border-color: #2f8f83; }
.preview input:checked::after { content: "✓"; display: block; font: bold 7px/7px "DejaVu Sans", sans-serif; text-align: center; color: #1f8a3c; }
.dialog-foot { display: flex; align-items: center; gap: 5px; height: 25px; padding: 0 2px 0 6px; border-top: 1px solid #cbc8b8; }
.help { width: 15px; height: 15px; border: 1px solid #3d5c8e; border-radius: 2px; }
.preview { display: flex; align-items: center; gap: 4px; height: 16px; width: 42px; margin: 0 13px 0 auto; padding-left: 3px; border: 1px solid #d6d3c4; }
.preview svg { width: 20px; height: 8px; }
.push { width: 51px; height: 14px; background: #f8f7f2; border: 1px solid #34507c; border-radius: 2px; color: #111; }
```
